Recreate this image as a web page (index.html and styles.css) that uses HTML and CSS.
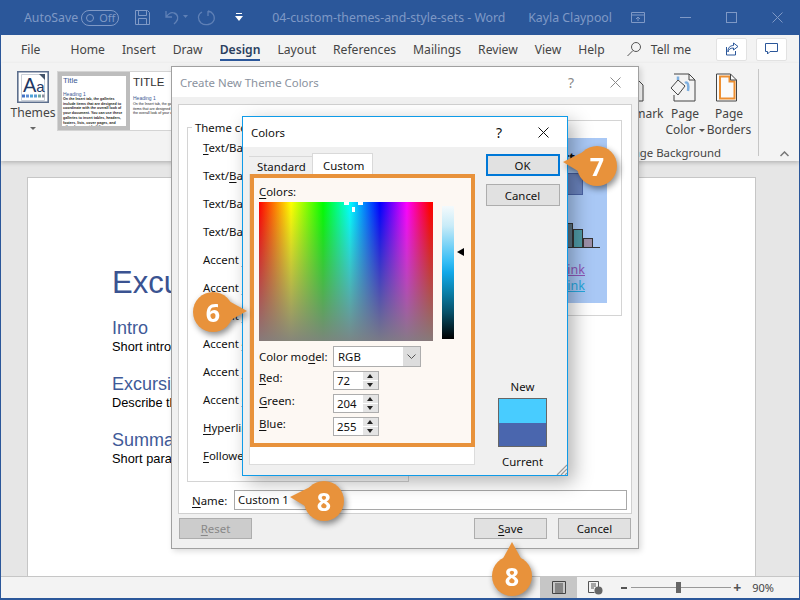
FILE: index.html
```html
<!DOCTYPE html>
<html lang="en">
<head>
  <meta charset="UTF-8">
  <title>04-custom-themes-and-style-sets - Word</title>
  <link rel="stylesheet" href="styles.css">
</head>
<body>
  <div class="window">
    <!-- Title bar -->
    <header class="titlebar">
      <span class="autosave">AutoSave</span>
      <span class="toggle"><i></i>Off</span>
      <svg class="qat-save" width="17" height="17" viewBox="0 0 17 17" fill="none" stroke="#7f99c6"><path d="M1.5 1.500h12l2 2v12h-14zM4.500 1.500v5h8v-5M4.500 15.500v-6h8v6"/></svg>
      <svg class="qat-undo" width="24" height="17" viewBox="0 0 24 17" fill="none" stroke="#5f80b6" stroke-width="1.300"><path d="M2 2v6h6M2 8c3-4 6-5 8-4 4 1 5 6 2 9l-2 2"/><path d="M19 6h5l-2.500 3z" fill="#5f80b6" stroke="none"/></svg>
      <svg class="qat-redo" width="19" height="17" viewBox="0 0 19 17" fill="none" stroke="#5f80b6" stroke-width="1.300"><path d="M11 2c5 1 7 5 6 9-2 5-9 6-13 3C0 10 1 5 5 3M11 2v5"/></svg>
      <svg class="qat-more" width="8" height="9" viewBox="0 0 8 9"><path d="M1 0h6v1H1zM0 3h8L4 8z" fill="#fff"/></svg>
      <span class="doc-title">04-custom-themes-and-style-sets - Word</span>
      <span class="user">Kayla Claypool</span>
      <svg class="display-opts" width="14" height="11" viewBox="0 0 14 11" fill="none" stroke="#7f99c6"><path d="M.5.500h13v10H.500zM.5 3h13M7 9V5M5 7l2-2 2 2"/></svg>
      <span class="win-min"></span>
      <span class="win-max"></span>
      <svg class="win-close" width="11" height="11" viewBox="0 0 11 11" stroke="#7f99c6"><path d="M.5.500l10 10M10.500.500l-10 10"/></svg>
    </header>

    <!-- Tabs -->
    <nav class="tabs">
      <span class="tab tab-file">File</span>
      <span class="tab">Home</span>
      <span class="tab">Insert</span>
      <span class="tab">Draw</span>
      <span class="tab tab-active">Design</span>
      <span class="tab">Layout</span>
      <span class="tab">References</span>
      <span class="tab">Mailings</span>
      <span class="tab">Review</span>
      <span class="tab">View</span>
      <span class="tab">Help</span>
      <svg class="search-icon" width="16" height="16" viewBox="0 0 16 16" fill="none" stroke="#555"><circle cx="10" cy="6" r="4.500"/><path d="M7 9.500L1.500 15"/></svg>
      <span class="tab">Tell me</span>
      <span class="tab-btn tab-btn-share">
        <svg width="14" height="14" viewBox="0 0 14 14" fill="none" stroke="#2b579a"><path d="M8.500 1l4.500 3.500L8.500 8V6C5 6 3.500 7.500 3 10c-.5-4 2-6.500 5.500-6.500zM1.500 5v8h9V9"/></svg>
      </span>
      <span class="tab-btn tab-btn-comment">
        <svg width="13" height="12" viewBox="0 0 13 12" fill="none" stroke="#2b579a"><path d="M.5.500h12v8H5L2.500 11V8.500h-2z"/></svg>
      </span>
    </nav>

    <!-- Ribbon -->
    <section class="ribbon">
      <div class="themes-btn">
        <svg class="themes-icon" width="32" height="32" viewBox="0 0 32 32">
          <path d="M.8.800h30.400v30.400H.800z" fill="#fff" stroke="#5d6f8d" stroke-width="1.600"/>
          <path d="M4.500 3.500h20l3 3v23h-23z" fill="#fff" stroke="#c9cfd8"/>
          <path d="M22 3h6v6z" fill="#44546a"/>
          <text x="6" y="21" class="themes-aa">A<tspan class="themes-aa-small">a</tspan></text>
          <path d="M5 23.500h3v3H5z" fill="#4472c4"/><path d="M9 23.500h3v3H9z" fill="#5b8ed6"/><path d="M13 23.500h3v3h-3z" fill="#4ea4d8"/><path d="M17 23.500h3v3h-3z" fill="#5b9bd5"/><path d="M21 23.500h3v3h-3z" fill="#6fa8a0"/><path d="M25 23.500h2.500v3H25z" fill="#8a8fa0"/>
        </svg>
        <span class="themes-label">Themes</span>
        <span class="caret"></span>
      </div>
      <div class="gallery">
        <div class="thumb thumb-selected">
          <div class="thumb-title">Title</div>
          <div class="thumb-heading">Heading 1</div>
          <p class="thumb-body">On the Insert tab, the galleries include items that are designed to coordinate with the overall look of your document. You can use these galleries to insert tables, headers, footers, lists, cover pages, and other document building</p>
        </div>
        <div class="thumb thumb-plain">
          <div class="thumb-upper">TITLE</div>
          <div class="thumb-heading">Heading 1</div>
          <p class="thumb-body">On the Insert tab, the galleries include items that are designed to coordinate with the overall look of your document.</p>
        </div>
      </div>
      <div class="page-bg">
        <div class="page-bg-items">
          <div class="rb-item rb-watermark">
            <svg width="24" height="29" viewBox="0 0 24 29" fill="none" stroke="#444"><path d="M1 5h15l7 7v16H1z"/></svg>
            <span>Watermark</span>
          </div>
          <div class="rb-item rb-color">
            <svg width="26" height="29" viewBox="0 0 26 29" fill="none" stroke="#444">
              <path d="M4 1h15l6 6v21H4v-6M19 1v6h6"/>
              <path d="M8 7L1 15l7 7 7-9z" fill="#f3f3f3"/>
              <path d="M8 7V3.500M15 10c3-2 4 3 3 8" stroke="#7fb0e0" stroke-width="2.500"/>
            </svg>
            <span>Page<br>Color<i class="mini-caret"></i></span>
          </div>
          <div class="rb-item rb-borders">
            <svg width="21" height="29" viewBox="0 0 21 29" fill="none">
              <path d="M.5 1h14l6 6v21H.500z" fill="#fafafa" stroke="#444"/>
              <path d="M4 3.500h9.500v5h5v17H4z" stroke="#ed8f31" stroke-width="2"/>
              <path d="M14.500 1v6h6" stroke="#444"/>
            </svg>
            <span>Page<br>Borders</span>
          </div>
        </div>
        <div class="page-bg-label">Page Background</div>
      </div>
      <svg class="collapse" width="9" height="6" viewBox="0 0 9 6" fill="none" stroke="#777" stroke-width="1.500"><path d="M.5 5l4-4 4 4"/></svg>
    </section>

    <!-- Document -->
    <main class="doc-area">
      <article class="page">
        <h1>Excursions</h1>
        <h2>Intro</h2>
        <p>Short introduction</p>
        <h2>Excursions</h2>
        <p>Describe the excursion</p>
        <h2>Summary</h2>
        <p>Short paragraph</p>
      </article>
    </main>

    <!-- Status bar -->
    <footer class="statusbar">
      <span class="view-btn view-active">
        <svg width="14" height="13" viewBox="0 0 14 13" fill="none" stroke="#444"><path d="M.5.500h13v12H.500zM3 3h8M3 5h8M3 7h8M3 9h8M3 11h8" /></svg>
      </span>
      <span class="view-btn">
        <svg width="15" height="14" viewBox="0 0 15 14" fill="none" stroke="#555"><path d="M.5.500h10v8M.5.500v11h6M3 3h5M3 5h5M3 7h3"/><circle cx="10.500" cy="9.500" r="4" fill="#666" stroke="none"/></svg>
      </span>
      <div class="zoom-ctrl">
        <span class="zoom-minus"></span>
        <span class="zoom-track"><i></i></span>
        <span class="zoom-plus">+</span>
      </div>
      <span class="zoom-pct">90%</span>
    </footer>
  </div>

  <!-- Create New Theme Colors dialog -->
  <div class="dialog theme-dialog">
    <div class="dlg-title">
      <span>Create New Theme Colors</span>
      <b class="dlg-help">?</b>
      <svg width="11" height="11" viewBox="0 0 11 11" stroke="#8a8a8a"><path d="M.5.500l10 10M10.500.500l-10 10"/></svg>
    </div>
    <div class="dlg-body">
      <div class="theme-panel">
        <div class="theme-main">
          <fieldset class="theme-group">
            <legend>Theme colors</legend>
            <div class="theme-row"><u>T</u>ext/Background - Dark 1</div>
            <div class="theme-row">Text/<u>B</u>ackground - Light 1</div>
            <div class="theme-row">Text/Background - Dark 2</div>
            <div class="theme-row">Text/Background - Light 2</div>
            <div class="theme-row">Accent <u>1</u></div>
            <div class="theme-row">Accent <u>2</u></div>
            <div class="theme-row">Accent <u>3</u></div>
            <div class="theme-row">Accent <u>4</u></div>
            <div class="theme-row">Accent <u>5</u></div>
            <div class="theme-row">Accent <u>6</u></div>
            <div class="theme-row"><u>H</u>yperlink</div>
            <div class="theme-row"><u>F</u>ollowed Hyperlink</div>
          </fieldset>
          <div class="preview">
            <div class="preview-sheet">
              <div class="preview-text">Chart</div>
              <div class="preview-box"></div>
              <div class="preview-chart"><i class="bar-a"></i><i class="bar-b"></i><i class="bar-c"></i></div>
              <div class="preview-link link-a">Hyperlink</div>
              <div class="preview-link link-b">Hyperlink</div>
            </div>
          </div>
        </div>
        <div class="name-row">
          <label><u>N</u>ame:</label>
          <div class="name-input">Custom 1</div>
        </div>
      </div>
      <div class="theme-actions">
        <button class="btn btn-reset"><u>R</u>eset</button>
        <button class="btn btn-save"><u>S</u>ave</button>
        <button class="btn">Cancel</button>
      </div>
    </div>
  </div>

  <!-- Colors dialog -->
  <div class="dialog colors-dialog">
    <div class="dlg-title">
      <span>Colors</span>
      <b class="dlg-help">?</b>
      <svg width="11" height="11" viewBox="0 0 11 11" stroke="#111"><path d="M.5.500l10 10M10.500.500l-10 10"/></svg>
    </div>
    <div class="colors-body">
      <div class="colors-left">
        <div class="color-tabs">
          <span class="color-tab">Standard</span>
          <span class="color-tab color-tab-on">Custom</span>
        </div>
        <div class="color-sheet">
          <div class="custom-box">
            <div class="colors-label"><u>C</u>olors:</div>
            <div class="picker-row">
              <div class="spectrum">
                <i class="cross cross-l"></i><i class="cross cross-r"></i><i class="cross cross-b"></i>
              </div>
              <div class="lum-bar"></div>
              <span class="lum-arrow"></span>
            </div>
            <div class="field-row model-row">
              <label>Color mo<u>d</u>el:</label>
              <div class="select">RGB<span class="select-arrow"><svg width="9" height="5" viewBox="0 0 9 5" fill="none" stroke="#555"><path d="M.5.500l4 4 4-4"/></svg></span></div>
            </div>
            <div class="field-row">
              <label><u>R</u>ed:</label>
              <div class="spin">72<span class="spin-btns"><i class="up"></i><i class="down"></i></span></div>
            </div>
            <div class="field-row">
              <label><u>G</u>reen:</label>
              <div class="spin">204<span class="spin-btns"><i class="up"></i><i class="down"></i></span></div>
            </div>
            <div class="field-row">
              <label><u>B</u>lue:</label>
              <div class="spin">255<span class="spin-btns"><i class="up"></i><i class="down"></i></span></div>
            </div>
          </div>
        </div>
      </div>
      <div class="colors-right">
        <button class="btn btn-default">OK</button>
        <button class="btn">Cancel</button>
        <div class="compare">
          <span>New</span>
          <div class="swatch"><i class="swatch-new"></i><i class="swatch-cur"></i></div>
          <span>Current</span>
        </div>
      </div>
    </div>
    <svg class="grip" width="11" height="11" viewBox="0 0 11 11" stroke="#999" stroke-width="1.200"><path d="M1 11L11 1M5 11l6-6M9 11l2-2"/></svg>
  </div>

  <!-- Step callouts -->
  <div class="callout tail-right step-6">6</div>
  <div class="callout tail-left step-7">7</div>
  <div class="callout tail-left step-8a">8</div>
  <div class="callout tail-up step-8b">8</div>
</body>
</html>
```

FILE: styles.css
```css
* {
  box-sizing: border-box;
}
html, body {
  margin: 0;
  padding: 0;
  height: 600px;
  overflow: hidden;
}
body {
  position: relative;
  font-family: "Noto Sans", "Open Sans", sans-serif;
  font-size: 11.4px;
  color: #111;
}
u {
  text-underline-offset: 2px;
}
.window {
  width: 800px;
  height: 600px;
  display: flex;
  flex-direction: column;
  background-color: #f3f3f3;
  border-left: 1px solid #2b579a;
  border-right: 1px solid #2b579a;
  border-bottom: 2px solid #2b579a;
}

/* title bar */
.titlebar {
  height: 35px;
  flex: none;
  display: flex;
  align-items: center;
  background-color: #2b579a;
  color: #7f99c6;
  font-size: 12.3px;
  margin: 0 -1px;
  padding-left: 24px;
}
.toggle {
  width: 38px;
  height: 16px;
  margin-left: 3px;
  border: 1px solid #7f99c6;
  border-radius: 8px;
  display: flex;
  align-items: center;
  gap: 5px;
  padding-left: 4px;
  font-size: 11px;
}
.toggle i {
  width: 8px;
  height: 8px;
  border-radius: 50%;
  border: 1px solid #7f99c6;
}
.qat-save { margin-left: 15px; }
.qat-undo { margin-left: 13px; }
.qat-redo { margin-left: 9px; }
.qat-more { margin-left: 19px; }
.doc-title { margin-left: 29px; width: 256px; white-space: nowrap; }
.user { white-space: nowrap; width: 103px; }
.win-min {
  width: 11px;
  height: 1px;
  margin-left: 35px;
  background-color: #7f99c6;
}
.win-max {
  width: 11px;
  height: 11px;
  margin-left: 35px;
  border: 1px solid #7f99c6;
}
.win-close { margin-left: 35px; }

/* tabs */
.tabs {
  height: 28px;
  flex: none;
  display: flex;
  align-items: center;
  gap: 17px;
  padding: 0 12px 0 20px;
  font-size: 12.15px;
  color: #444;
}
.tab {
  position: relative;
  white-space: nowrap;
}
.tab-file { margin-right: 13px; }
.tab-active {
  font-weight: 600;
  color: #2b3f5f;
}
.tab-active::after {
  content: "";
  position: absolute;
  left: 0;
  right: 0;
  bottom: -3px;
  height: 2px;
  background-color: #2b579a;
}
.search-icon { margin-left: 4px; margin-right: -8px; }
.tab-btn {
  width: 31px;
  height: 23px;
  display: flex;
  align-items: center;
  justify-content: center;
  background-color: #fff;
  border: 1px solid #e2e2e2;
  border-radius: 2px;
}
.tab-btn-share { margin-left: auto; }
.tab-btn-comment { margin-left: -8px; }

/* ribbon */
.ribbon {
  height: 98px;
  flex: none;
  display: flex;
  align-items: flex-start;
  padding-left: 8px;
  position: relative;
  box-shadow: 0 2px 4px rgba(0, 0, 0, 0.2);
  color: #444;
}
.themes-btn {
  width: 48px;
  display: flex;
  flex-direction: column;
  align-items: center;
  margin-top: 8px;
  flex: none;
}
.themes-icon {
  display: block;
}
.themes-aa {
  font-family: "Liberation Sans", sans-serif;
  font-size: 20px;
  fill: #1f3864;
}
.themes-aa-small {
  font-size: 15px;
}
.themes-label {
  margin-top: 1px;
  font-size: 12.15px;
}
.caret {
  margin-top: 6px;
  border-left: 3px solid transparent;
  border-right: 3px solid transparent;
  border-top: 3px solid #666;
}
.gallery {
  width: 130px;
  height: 60px;
  margin-top: 8px;
  display: flex;
  background-color: #fff;
  border: 1px solid #d4d4d4;
  overflow: hidden;
  flex: none;
}
.thumb {
  flex: none;
  width: 72px;
  overflow: hidden;
}
.thumb-selected {
  background-color: #fff;
  border: 4px solid #bdbdbd;
  padding: 0 1px;
}
.thumb-plain {
  padding: 0 0 0 3px;
}
.thumb-title {
  font-family: "Liberation Sans", sans-serif;
  font-size: 8px;
  color: #3c5a94;
  line-height: 10px;
  height: 15px;
}
.thumb-upper {
  font-family: "Liberation Sans", sans-serif;
  font-size: 11.5px;
  color: #333;
  line-height: 20px;
  height: 23px;
}
.thumb-heading {
  font-family: "Liberation Sans", sans-serif;
  font-size: 5px;
  color: #3c5a94;
  line-height: 6px;
}
.thumb-body {
  margin: 0;
  font-family: "Liberation Sans", sans-serif;
  font-size: 3.6px;
  font-weight: bold;
  color: #222;
  line-height: 4.700px;
}
.thumb-plain .thumb-body {
  font-weight: normal;
  margin-top: 1px;
}
.page-bg {
  margin-left: auto;
  margin-right: 48px;
  margin-top: 10px;
  width: 150px;
  flex: none;
}
.page-bg-items {
  display: flex;
  height: 72px;
}
.rb-item {
  display: flex;
  flex-direction: column;
  align-items: center;
  text-align: center;
  line-height: 16px;
  font-size: 12px;
}
.rb-item svg { margin-bottom: 4px; flex: none; }
.rb-watermark { width: 62px; white-space: nowrap; }
.rb-color { width: 44px; }
.rb-borders { width: 44px; }
.rb-color svg { margin-right: 4px; }
.rb-borders svg { margin-right: 5px; }
.mini-caret {
  display: inline-block;
  margin-left: 3px;
  vertical-align: middle;
  border-left: 3px solid transparent;
  border-right: 3px solid transparent;
  border-top: 3px solid #555;
}
.page-bg-label {
  text-align: right;
  padding-right: 30px;
  line-height: 16px;
  white-space: nowrap;
  font-size: 11.400px;
}
.ribbon::after {
  content: "";
  position: absolute;
  left: 757px;
  top: 6px;
  width: 1px;
  height: 87px;
  background-color: #c6c6c6;
}
.collapse {
  position: absolute;
  left: 779px;
  top: 88px;
}

/* document */
.doc-area {
  flex: 1;
  min-height: 0;
  background-color: #e6e6e6;
  border-bottom: 1px solid #c6c6c6;
  padding: 16px 43px 0 26px;
  overflow: hidden;
}
.page {
  height: 500px;
  background-color: #fff;
  border: 1px solid #c6c6c6;
  padding: 87px 0 0 84px;
  font-family: "Liberation Sans", sans-serif;
  color: #000;
}
.page h1 {
  margin: 0;
  font-size: 31px;
  font-weight: normal;
  color: #3b5391;
  line-height: 36px;
  height: 53px;
}
.page h2 {
  margin: 0;
  font-size: 18px;
  font-weight: normal;
  color: #3f5a98;
  line-height: 21px;
}
.page p {
  margin: 0 0 20px;
  font-size: 12.800px;
  line-height: 15px;
}

/* status bar */
.statusbar {
  height: 21px;
  flex: none;
  display: flex;
  align-items: center;
  justify-content: flex-end;
  padding-right: 25px;
  font-size: 11px;
  color: #444;
}
.view-btn {
  width: 37px;
  height: 21px;
  display: flex;
  align-items: center;
  justify-content: center;
}
.view-active {
  background-color: #c6c6c6;
}
.zoom-ctrl {
  display: flex;
  align-items: center;
  margin-left: 7px;
}
.zoom-minus {
  width: 6px;
  height: 2px;
  background-color: #555;
}
.zoom-track {
  position: relative;
  width: 100px;
  height: 1px;
  margin: 0 2px 0 4px;
  background-color: #999;
}
.zoom-track i {
  position: absolute;
  left: 45px;
  top: -5px;
  width: 5px;
  height: 11px;
  background-color: #666;
}
.zoom-plus {
  font-size: 14px;
  font-weight: bold;
  line-height: 14px;
  color: #555;
}
.zoom-pct { margin-left: 11px; }

/* dialogs */
.dialog {
  position: absolute;
  display: flex;
  flex-direction: column;
  background-color: #f0f0f0;
}
.dlg-title {
  flex: none;
  height: 30px;
  display: flex;
  align-items: center;
  background-color: #fff;
}
.dlg-title span { flex: 1; }
.dlg-help { font-weight: normal; font-size: 14px; margin-right: 36px; }
.theme-dialog {
  left: 171px;
  top: 66px;
  width: 468px;
  height: 483px;
  border: 1px solid #a0a0a0;
  box-shadow: 2px 2px 6px rgba(0, 0, 0, 0.15);
}
.theme-dialog .dlg-title {
  padding: 0 17px 0 8px;
  color: #8a929e;
}
.theme-dialog .dlg-help { color: #8a8a8a; }
.dlg-body {
  flex: 1;
  padding: 7px 6px 0;
}
.theme-panel {
  height: 410px;
  padding: 15px 4px 0 8px;
  background-color: #fff;
  border: 1px solid #d0d0d0;
}
.theme-main {
  display: flex;
  align-items: flex-start;
  height: 370px;
}
.theme-group {
  margin: 0;
  width: 222px;
  height: 362px;
  flex: none;
  padding: 4px 0 0 15px;
  border: 1px solid #d4d4d4;
  min-width: 0;
  overflow: hidden;
  white-space: nowrap;
}
.theme-group legend {
  padding: 0 3px;
  margin-left: -11px;
}
.theme-row {
  height: 28px;
  line-height: 17px;
}
.preview {
  margin-left: 12px;
  width: 201px;
  height: 196px;
  flex: none;
  border: 1px solid #d4d4d4;
  padding: 17px 14px 0 12px;
  background-color: #fff;
}
.preview-sheet {
  height: 165px;
  background-color: #a9c8f5;
  padding-top: 13px;
  text-align: right;
  overflow: hidden;
}
.preview-text {
  font-size: 14px;
  font-weight: bold;
  padding-right: 32px;
  line-height: 14px;
}
.preview-box {
  width: 40px;
  height: 22px;
  margin: 8px 0 0 109px;
  background-color: #6a83bd;
  border: 1px solid #4a63a5;
}
.preview-chart {
  height: 53px;
  margin: 0 7px 0 90px;
  display: flex;
  align-items: flex-end;
  justify-content: flex-end;
  padding-right: 7px;
  border-bottom: 1px solid #333;
}
.preview-chart i {
  width: 10px;
  border: 1px solid #333;
  border-bottom: none;
}
.bar-a { height: 24px; background-color: #5b7280; }
.bar-b { height: 18px; background-color: #4f9aa5; }
.bar-c { height: 9px; background-color: #9c8fa8; }
.preview-link {
  font-size: 12.5px;
  text-decoration: underline;
  padding-right: 22px;
  line-height: 16px;
}
.link-a { color: #8e55b5; margin-top: 14px; }
.link-b { color: #25a9e0; }
.name-row {
  display: flex;
  align-items: center;
  height: 20px;
  padding-left: 5px;
}
.name-row label { width: 42px; flex: none; }
.name-input {
  width: 393px;
  height: 20px;
  flex: none;
  border: 1px solid #a8a8a8;
  background-color: #fff;
  padding-left: 3px;
  line-height: 18px;
}
.theme-actions {
  display: flex;
  margin-top: 4px;
  padding: 0 1px;
}
.btn {
  width: 73px;
  height: 21px;
  padding: 0;
  font-family: inherit;
  font-size: 11.400px;
  color: #111;
  background-color: #e1e1e1;
  border: 1px solid #adadad;
}
.btn-reset {
  background-color: #ccc;
  color: #888;
  margin-right: auto;
}
.btn-save { margin-right: 11px; }

/* colors dialog */
.colors-dialog {
  left: 242px;
  top: 116px;
  width: 326px;
  height: 360px;
  border: 1px solid #0f9be8;
  box-shadow: 6px 6px 18px rgba(0, 0, 0, 0.3);
}
.colors-dialog .dlg-title {
  padding: 0 18px 0 8px;
}
.colors-body {
  flex: 1;
  display: flex;
  padding: 7px 7px 0 6px;
}
.colors-left {
  width: 226px;
  flex: none;
}
.color-tabs {
  height: 22px;
  display: flex;
  align-items: flex-end;
}
.color-tab {
  width: 63px;
  height: 20px;
  padding-left: 8px;
  line-height: 20px;
  border-top: 1px solid #d9d9d9;
}
.color-tab-on {
  width: 61px;
  height: 23px;
  background-color: #fff;
  border: 1px solid #d9d9d9;
  border-bottom: none;
  padding-left: 10px;
  line-height: 24px;
}
.color-sheet {
  height: 291px;
  background-color: #fff;
  border: 1px solid #dcdcdc;
  border-top: none;
}
.custom-box {
  height: 273px;
  margin-top: -2px;
  margin-right: -1px;
  border: 4px solid #e8923b;
  background-color: #fdf8f3;
  padding: 5px 0 0 5px;
  position: relative;
}
.colors-label {
  line-height: 17px;
  height: 19px;
}
.picker-row {
  display: flex;
  height: 142px;
  align-items: flex-start;
}
.spectrum {
  position: relative;
  width: 174px;
  height: 139px;
  flex: none;
  background-image:
    linear-gradient(to bottom, rgba(128, 128, 128, 0) 0%, rgba(128, 128, 128, 0.95) 100%),
    linear-gradient(to right, #f00 0%, #ff0 18.4%, #0f0 36.8%, #0ff 52.3%, #00f 69.5%, #f0f 85%, #f00 98%, #f00 100%);
}
.cross {
  position: absolute;
  background-color: #fff;
}
.cross-l { left: 85px; top: 0; width: 5px; height: 3px; }
.cross-r { left: 99px; top: 0; width: 5px; height: 3px; }
.cross-b { left: 93px; top: 5px; width: 3px; height: 5px; }
.lum-bar {
  width: 12px;
  height: 133px;
  margin: 4px 0 0 9px;
  flex: none;
  background-image: linear-gradient(to bottom, #f4fafc 0%, #c8ebf8 15%, #35bdf5 42%, #12a8e8 50%, #0b7fa8 65%, #075068 80%, #000 100%);
}
.lum-arrow {
  width: 0;
  height: 0;
  margin: 46px 0 0 3px;
  border-top: 4px solid transparent;
  border-bottom: 4px solid transparent;
  border-right: 7px solid #000;
}
.field-row {
  display: flex;
  align-items: center;
  height: 23px;
}
.field-row label {
  width: 74px;
  margin-top: -7px;
}
.model-row {
  height: 25px;
}
.model-row label { margin-top: 0; }
.select {
  width: 88px;
  height: 21px;
  display: flex;
  align-items: center;
  justify-content: space-between;
  padding-left: 4px;
  background-color: #fff;
  border: 1px solid #adadad;
}
.select-arrow {
  width: 17px;
  height: 19px;
  display: flex;
  align-items: center;
  justify-content: center;
  background-color: #ddd;
}
.spin {
  width: 46px;
  height: 19px;
  display: flex;
  align-items: center;
  justify-content: space-between;
  padding-left: 3px;
  background-color: #fff;
  border: 1px solid #adadad;
}
.spin-btns {
  width: 15px;
  height: 17px;
  display: flex;
  flex-direction: column;
  gap: 1px;
}
.spin-btns i {
  flex: 1;
  background-color: #e4e4e4;
  position: relative;
}
.spin-btns i::after {
  content: "";
  position: absolute;
  left: 4px;
  top: 2px;
  border-left: 3px solid transparent;
  border-right: 3px solid transparent;
}
.spin-btns .up::after { border-bottom: 4px solid #222; }
.spin-btns .down::after { border-top: 4px solid #222; }
.colors-right {
  flex: 1;
  display: flex;
  flex-direction: column;
  align-items: center;
  padding-left: 10px;
}
.colors-right .btn {
  width: 74px;
  height: 22px;
  flex: none;
  margin-bottom: 8px;
}
.btn-default {
  border: 2px solid #0078d7;
}
.compare {
  margin-top: 165px;
  display: flex;
  flex-direction: column;
  align-items: center;
}
.swatch {
  width: 49px;
  height: 49px;
  margin: 4px 0 7px;
  border: 1px solid #666;
  display: flex;
  flex-direction: column;
}
.swatch i { flex: 1; }
.swatch-new { background-color: #48ccff; }
.swatch-cur { background-color: #4a66ae; }
.grip {
  position: absolute;
  right: 0;
  bottom: 0;
}

/* step callouts */
.callout {
  position: absolute;
  width: 40px;
  height: 40px;
  border-radius: 50%;
  background-color: #e8923b;
  color: #fff;
  font-family: "Open Sans", sans-serif;
  font-size: 25px;
  font-weight: bold;
  line-height: 40px;
  text-align: center;
  filter: drop-shadow(2px 3px 3px rgba(0, 0, 0, 0.45));
}
.callout::after {
  content: "";
  position: absolute;
  background-color: #e8923b;
}
.tail-right::after {
  left: 34px;
  top: 8px;
  width: 20px;
  height: 22px;
  clip-path: polygon(0 0, 100% 50%, 0 100%);
}
.tail-left::after {
  right: 34px;
  top: 6px;
  width: 20px;
  height: 22px;
  clip-path: polygon(100% 0, 0 45%, 100% 100%);
}
.tail-up::after {
  left: 9px;
  bottom: 34px;
  width: 22px;
  height: 20px;
  clip-path: polygon(50% 0, 100% 100%, 0 100%);
}
.step-6 { left: 193px; top: 292px; }
.step-7 { left: 577px; top: 146px; }
.step-8a { left: 304px; top: 481px; }
.step-8b { left: 492px; top: 556px; }
```
